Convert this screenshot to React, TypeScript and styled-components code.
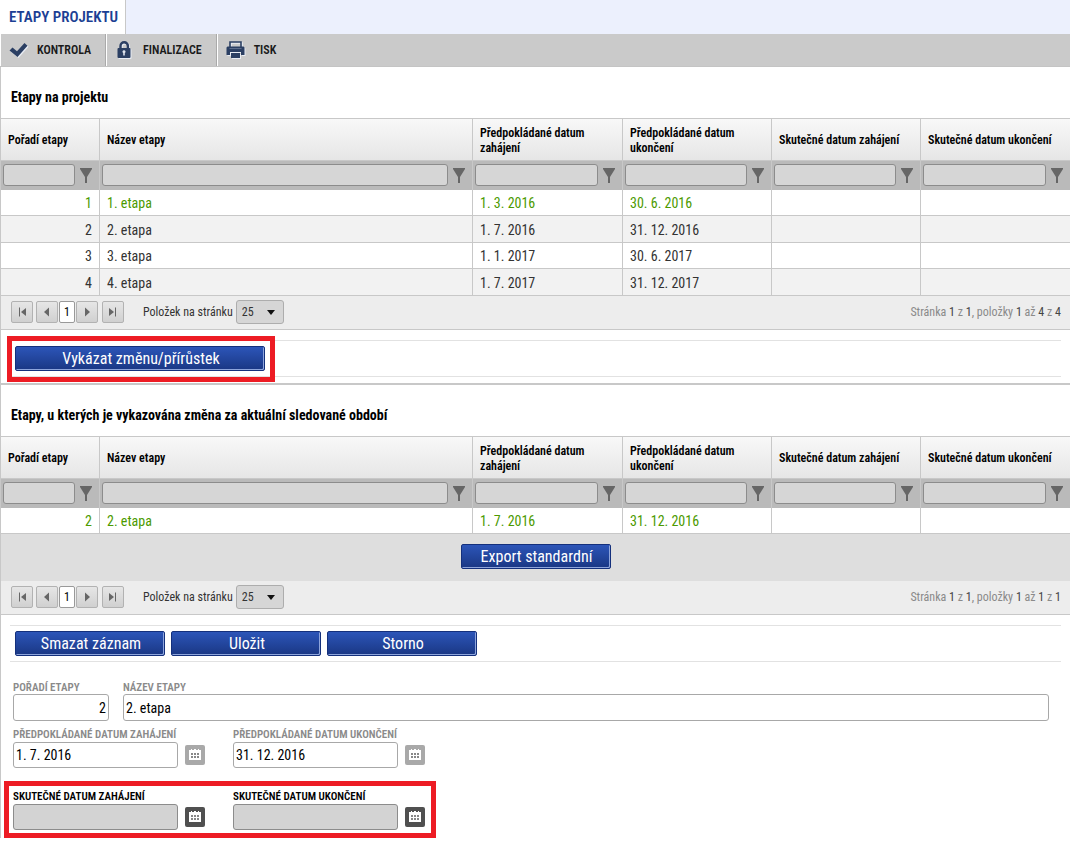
import React, { useId } from "react";
import styled, { createGlobalStyle } from "styled-components";

const GlobalStyle = createGlobalStyle`
  *, *::before, *::after { box-sizing: border-box; }
  body {
    margin: 0;
    background: #fff;
    color: #333;
    font-family: "Roboto Condensed", "Liberation Sans Narrow", Roboto, sans-serif;
    font-size: 14px;
  }
  button, input, select { font: inherit; margin: 0; }
`;

const TabStrip = styled.nav`
  display: flex;
  height: 34px;
  background: #ecf0fd;
`;

const Tab = styled.a`
  display: flex;
  align-items: center;
  padding: 0 7px 0 9px;
  background: #fff;
  border-right: 1px solid #c8c8c8;
  color: #1c3f94;
  font-size: 15px;
  font-weight: 600;
  text-decoration: none;
`;

const Toolbar = styled.div`
  display: flex;
  height: 33px;
  background: #cacaca;
  border-bottom: 1px solid #c4c4c4;
`;

const ToolButton = styled.button`
  display: flex;
  align-items: center;
  gap: 8px;
  padding: 0 15px 0 8px;
  border: 0;
  border-left: 1px solid #fff;
  background: none;
  color: #1a1a1a;
  font-size: 12px;
  font-weight: 600;
  box-shadow: inset -1px 0 #aaa;

  &:last-child { box-shadow: none; }
  svg { filter: drop-shadow(1px 1px 0 #e8ecf4); }
`;

const Content = styled.main`
  border-left: 1px solid #c8c8c8;
`;

const Section = styled.section<{ $divided?: boolean }>`
  border-top: ${(p) => (p.$divided ? "2px solid #c8c8c8" : "0")};
`;

const Heading = styled.h2`
  margin: 0;
  padding: 20px 10px 11px;
  color: #000;
  font-size: 14px;
  line-height: 20px;
  font-weight: 700;
`;

const Grid = styled.table`
  width: 100%;
  table-layout: fixed;
  border-collapse: separate;
  border-spacing: 0;
  border-top: 1px solid #c8c8c8;
`;

const Col = styled.col<{ $width?: string }>`
  width: ${(p) => p.$width ?? "auto"};
`;

const HeadCell = styled.th`
  height: 42px;
  padding: 2px 7px 0;
  border-bottom: 1px solid #c8c8c8;
  background: linear-gradient(#f8f8f8, #e6e6e6);
  color: #000;
  font-size: 12px;
  font-weight: 600;
  line-height: 15px;
  text-align: left;
  &:not(:last-child) { border-right: 1px solid #c8c8c8; }
`;

const FilterCell = styled.td`
  padding: 0;
  background: #bababa;
  &:not(:last-child) { border-right: 1px solid #c8c8c8; }
`;

const FilterBox = styled.div`
  display: flex;
  align-items: center;
  gap: 5px;
  height: 29px;
  padding: 0 7px 1px 2px;
`;

const FilterInput = styled.input`
  flex: 1;
  min-width: 0;
  height: 22px;
  border: 1px solid #8c8c8c;
  border-radius: 3px;
  background: #d6d6d6;
  padding: 0 4px;
`;

const PlainIconButton = styled.button`
  display: flex;
  padding: 0;
  border: 0;
  background: none;
`;

const Cell = styled.td<{ $right?: boolean }>`
  height: 26px;
  padding: 0 7px;
  border-bottom: 1px solid #c8c8c8;
  line-height: 20px;
  text-align: ${(p) => (p.$right ? "right" : "left")};
  &:not(:last-child) { border-right: 1px solid #c8c8c8; }
`;

const Row = styled.tr<{ $active?: boolean }>`
  color: ${(p) => (p.$active ? "#4c9a00" : "#333")};
  background: #fff;
  &:nth-child(even) { background: #f2f2f2; }
  &:nth-child(even) ${Cell} {
    height: 27px;
    padding-top: 1px;
  }
`;

const ExportBar = styled.div`
  display: flex;
  justify-content: center;
  align-items: center;
  height: 47px;
  padding-bottom: 2px;
  background: #dedede;
`;

const BlueButton = styled.button<{ $wide?: boolean }>`
  width: ${(p) => (p.$wide ? 250 : 150)}px;
  height: 25px;
  padding: 0 0 0 2px;
  border: 1px solid #14307c;
  border-radius: 2px;
  background: linear-gradient(#2c55b8, #1a3784);
  box-shadow: inset -1px -1px #8ea5dc;
  color: #fff;
  font-size: 16px;
  line-height: 22px;
`;

const Pager = styled.div`
  display: flex;
  align-items: center;
  height: 34px;
  padding: 0 9px 1px 10px;
  background: #ededed;
  border-bottom: 1px solid #c8c8c8;
  font-size: 12px;
`;

const PageButton = styled.button<{ $edge?: "first" | "last" }>`
  display: flex;
  align-items: center;
  justify-content: center;
  width: 22px;
  height: 22px;
  padding: 0;
  margin-right: ${(p) => (p.$edge === "first" ? 3 : 1)}px;
  margin-left: ${(p) => (p.$edge === "last" ? 3 : 0)}px;
  border: 1px solid #b2b2b2;
  border-radius: 2px;
  background: linear-gradient(#e6e6e6, #d0d0d0);
`;

const CurrentPage = styled.span`
  width: 16px;
  height: 22px;
  margin-right: 1px;
  border: 1px solid #999;
  border-radius: 2px;
  background: #fff;
  color: #000;
  line-height: 20px;
  text-align: center;
`;

const SizeLabel = styled.label`
  margin: 0 3px 0 18px;
`;

const SelectBox = styled.span`
  display: grid;
  align-items: center;
  width: 48px;
  > * { grid-area: 1 / 1; }
  svg { justify-self: end; margin-right: 9px; pointer-events: none; }
`;

const PageSelect = styled.select`
  appearance: none;
  width: 100%;
  height: 24px;
  padding: 0 5px;
  border: 1px solid #adadad;
  border-radius: 3px;
  background: #d6d6d6;
  color: #333;
`;

const PageInfo = styled.span`
  margin-left: auto;
  color: #8a8a8a;
  b { color: #444; font-weight: 400; }
`;

const ActionBar = styled.div`
  display: flex;
  gap: 6px;
  margin: 10px 9px 0;
  padding: 5px;
  border: 1px solid #e2e2e2;
  border-width: 1px 0;
`;

const Framed = styled.div`
  display: flex;
  margin: -2px 0 -3px;
  padding: 2px 2px 3px 0;
  outline: 5px solid #ed1c24;
  outline-offset: 3px;
  background: #fff;
`;

const Spacer = styled.div`
  height: 6px;
`;

const Form = styled.form`
  padding: 20px 21px 0 12px;
`;

const FieldRow = styled.div`
  display: flex;
  align-items: flex-end;
  margin-bottom: 8px;
`;

const FramedRow = styled(FieldRow)`
  width: max-content;
  margin: 13px 0 0 -9px;
  padding: 5px 6px 3px 4px;
  border: 5px solid #ed1c24;
`;

const Field = styled.div<{ $grow?: boolean; $gap?: number }>`
  flex: ${(p) => (p.$grow ? 1 : "none")};
  margin-right: ${(p) => p.$gap ?? 0}px;
`;

const FieldLabel = styled.label<{ $strong?: boolean }>`
  display: block;
  color: ${(p) => (p.$strong ? "#000" : "#8a8a8a")};
  font-size: 11px;
  line-height: 12px;
  font-weight: 600;
  white-space: nowrap;
`;

const TextInput = styled.input<{ $width?: string; $right?: boolean; $muted?: boolean }>`
  display: block;
  width: ${(p) => p.$width ?? "165px"};
  height: 27px;
  padding: 0 2px;
  border: 1px solid ${(p) => (p.$muted ? "#8c8c8c" : "#a8a8a8")};
  border-radius: 3px;
  background: ${(p) => (p.$muted ? "#d3d3d3" : "#fff")};
  color: #000;
  text-align: ${(p) => (p.$right ? "right" : "left")};
`;

const DateLine = styled.div`
  display: flex;
  align-items: center;
  gap: 7px;
  height: 26px;
  margin-top: 1px;
  ${TextInput} { height: 26px; }
`;

const CalendarButton = styled.button<{ $dark?: boolean }>`
  display: flex;
  align-items: center;
  justify-content: center;
  width: 20px;
  height: 20px;
  padding: 0;
  border: 0;
  border-radius: 2px;
  background: ${(p) => (p.$dark ? "#505050" : "#a9a9a9")};
`;

const CheckIcon = () => (
  <svg width="20" height="16" viewBox="0 0 20 16" aria-hidden="true">
    <path d="M0.5 8.5 3.5 5.5 8 9.2 15.5 1 18.5 3.8 8.5 15z" fill="#2b3f63" />
  </svg>
);

const LockIcon = () => (
  <svg width="20" height="18" viewBox="0 0 20 18" aria-hidden="true">
    <path d="M5.5 8V5a3.7 3.7 0 0 1 7.4 0v3" fill="none" stroke="#2b3f63" strokeWidth="2.4" />
    <rect x="2.5" y="7" width="13" height="10" rx="1" fill="#2b3f63" />
    <path d="M9 9.2a1.5 1.5 0 0 1 .8 2.8v2.6H8.2V12a1.5 1.5 0 0 1 .8-2.8z" fill="#dfe4ee" />
  </svg>
);

const PrinterIcon = () => (
  <svg width="20" height="18" viewBox="0 0 20 18" aria-hidden="true">
    <path d="M4 6V1h11v5" fill="none" stroke="#2b3f63" strokeWidth="1.6" />
    <path d="M1.5 5.5h16l1 1V14H15v-3H4v3H.5V6.5z" fill="#2b3f63" />
    <path d="M3.5 7.5h12" stroke="#5d6d8c" strokeWidth="1" />
    <path d="M5 12h9v5H5z" fill="#2b3f63" />
  </svg>
);

const FunnelIcon = () => (
  <svg width="12" height="15" viewBox="0 0 12 15" aria-hidden="true">
    <path d="M0 0h12v1L7 9v6H5V9L0 1z" fill="#666" />
  </svg>
);

const ArrowIcon = ({ back, bar }: { back?: boolean; bar?: boolean }) => (
  <svg width="10" height="10" viewBox="0 0 10 10" aria-hidden="true">
    <g fill="#666" transform={back ? "rotate(180 5 5)" : undefined}>
      <path d={bar ? "M1 1v8l5-4z" : "M3 0.5v9l5-4.5z"} />
      {bar && <rect x="7" y="0.5" width="1" height="9" />}
    </g>
  </svg>
);

const CalendarIcon = () => (
  <svg width="12" height="12" viewBox="0 0 12 12" shapeRendering="crispEdges" aria-hidden="true">
    <path d="M0 1h2V0h1v1h2V0h2v1h2V0h1v1h2v10H0z" fill="#fff" />
    <path d="M2 4h2v2H2zM5 4h2v2H5zM8 4h2v2H8zM2 7h2v2H2zM5 7h2v2H5zM8 7h2v2H8z" fill="#888" />
  </svg>
);

const columns = [
  { title: "Pořadí etapy", width: "99px" },
  { title: "Název etapy" },
  { title: "Předpokládané datum zahájení", width: "150px" },
  { title: "Předpokládané datum ukončení", width: "149px" },
  { title: "Skutečné datum zahájení", width: "149px" },
  { title: "Skutečné datum ukončení", width: "149px" },
];

type Stage = [string, string, string, string];

const allStages: Stage[] = [
  ["1", "1. etapa", "1. 3. 2016", "30. 6. 2016"],
  ["2", "2. etapa", "1. 7. 2016", "31. 12. 2016"],
  ["3", "3. etapa", "1. 1. 2017", "30. 6. 2017"],
  ["4", "4. etapa", "1. 7. 2017", "31. 12. 2017"],
];

const StageGrid = ({ stages }: { stages: Stage[] }) => (
  <Grid>
    <colgroup>
      {columns.map((c) => (
        <Col key={c.title} $width={c.width} />
      ))}
    </colgroup>
    <thead>
      <tr>
        {columns.map((c) => (
          <HeadCell key={c.title} scope="col">{c.title}</HeadCell>
        ))}
      </tr>
      <tr>
        {columns.map((c) => (
          <FilterCell key={c.title}>
            <FilterBox>
              <FilterInput aria-label={c.title} />
              <PlainIconButton type="button" aria-label={c.title}>
                <FunnelIcon />
              </PlainIconButton>
            </FilterBox>
          </FilterCell>
        ))}
      </tr>
    </thead>
    <tbody>
      {stages.map((stage, i) => (
        <Row key={stage[0]} $active={i === 0}>
          {stage.map((value, j) => (
            <Cell key={j} $right={j === 0}>{value}</Cell>
          ))}
          <Cell />
          <Cell />
        </Row>
      ))}
    </tbody>
  </Grid>
);

const PagerBar = ({ count }: { count: number }) => {
  const id = useId();
  return (
    <Pager>
      <PageButton type="button" $edge="first" aria-label="První stránka"><ArrowIcon back bar /></PageButton>
      <PageButton type="button" aria-label="Předchozí stránka"><ArrowIcon back /></PageButton>
      <CurrentPage>1</CurrentPage>
      <PageButton type="button" aria-label="Další stránka"><ArrowIcon /></PageButton>
      <PageButton type="button" $edge="last" aria-label="Poslední stránka"><ArrowIcon bar /></PageButton>
      <SizeLabel htmlFor={id}>Položek na stránku</SizeLabel>
      <SelectBox>
        <PageSelect id={id} defaultValue="25">
          <option>25</option>
        </PageSelect>
        <svg width="8" height="5" viewBox="0 0 8 5" aria-hidden="true">
          <path d="M0 0h8L4 5z" fill="#111" />
        </svg>
      </SelectBox>
      <PageInfo>
        Stránka <b>1</b> z <b>1</b>, položky <b>1</b> až <b>{count}</b> z <b>{count}</b>
      </PageInfo>
    </Pager>
  );
};

const DateField = ({ label, value, editable, gap }: { label: string; value?: string; editable?: boolean; gap?: number }) => {
  const id = useId();
  return (
    <Field $gap={gap}>
      <FieldLabel htmlFor={id} $strong={editable}>{label}</FieldLabel>
      <DateLine>
        <TextInput id={id} defaultValue={value} $muted={editable} />
        <CalendarButton type="button" aria-label={label} $dark={editable}>
          <CalendarIcon />
        </CalendarButton>
      </DateLine>
    </Field>
  );
};

export default function App() {
  return (
    <>
      <GlobalStyle />
      <TabStrip>
        <Tab href="#etapy">ETAPY PROJEKTU</Tab>
      </TabStrip>
      <Toolbar>
        <ToolButton type="button"><CheckIcon />KONTROLA</ToolButton>
        <ToolButton type="button"><LockIcon />FINALIZACE</ToolButton>
        <ToolButton type="button"><PrinterIcon />TISK</ToolButton>
      </Toolbar>
      <Content>
        <Section>
          <Heading>Etapy na projektu</Heading>
          <StageGrid stages={allStages} />
          <PagerBar count={4} />
          <ActionBar>
            <Framed>
              <BlueButton type="button" $wide>Vykázat změnu/přírůstek</BlueButton>
            </Framed>
          </ActionBar>
          <Spacer />
        </Section>
        <Section $divided>
          <Heading>Etapy, u kterých je vykazována změna za aktuální sledované období</Heading>
          <StageGrid stages={[allStages[1]]} />
          <ExportBar>
            <BlueButton type="button">Export standardní</BlueButton>
          </ExportBar>
          <PagerBar count={1} />
          <ActionBar>
            <BlueButton type="button">Smazat záznam</BlueButton>
            <BlueButton type="button">Uložit</BlueButton>
            <BlueButton type="button">Storno</BlueButton>
          </ActionBar>
          <Form>
            <FieldRow>
              <Field $gap={14}>
                <FieldLabel htmlFor="order">POŘADÍ ETAPY</FieldLabel>
                <TextInput id="order" defaultValue="2" $width="96px" $right />
              </Field>
              <Field $grow>
                <FieldLabel htmlFor="name">NÁZEV ETAPY</FieldLabel>
                <TextInput id="name" defaultValue="2. etapa" $width="100%" />
              </Field>
            </FieldRow>
            <FieldRow>
              <DateField label="PŘEDPOKLÁDANÉ DATUM ZAHÁJENÍ" value="1. 7. 2016" gap={28} />
              <DateField label="PŘEDPOKLÁDANÉ DATUM UKONČENÍ" value="31. 12. 2016" />
            </FieldRow>
            <FramedRow>
              <DateField label="SKUTEČNÉ DATUM ZAHÁJENÍ" editable gap={28} />
              <DateField label="SKUTEČNÉ DATUM UKONČENÍ" editable />
            </FramedRow>
          </Form>
        </Section>
      </Content>
    </>
  );
}
